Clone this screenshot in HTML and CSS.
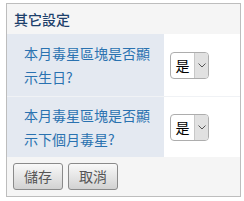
FILE: index.html
```html
<!DOCTYPE html>
<html>
<head>
<meta charset="utf-8">
<link rel="stylesheet" href="styles.css">
</head>
<body>
<div class="panel">
  <div class="panel-head">其它設定</div>
  <div class="row row-first">
    <div class="label">本月毒星區塊是否顯示生日?</div>
    <div class="field"><div class="select"><span class="val">是</span><span class="arrow"><svg width="8" height="5" viewBox="0 0 8 5"><path d="M0.5 0.5 L4 4 L7.5 0.5" fill="none" stroke="#555" stroke-width="1"/></svg></span></div></div>
  </div>
  <div class="row row-second">
    <div class="label">本月毒星區塊是否顯示下個月毒星?</div>
    <div class="field"><div class="select"><span class="val">是</span><span class="arrow"><svg width="8" height="5" viewBox="0 0 8 5"><path d="M0.5 0.5 L4 4 L7.5 0.5" fill="none" stroke="#555" stroke-width="1"/></svg></span></div></div>
  </div>
  <div class="panel-foot">
    <button class="btn">儲存</button>
    <button class="btn">取消</button>
  </div>
</div>
</body>
</html>
```
FILE: styles.css
```css
html, body {
  margin: 0;
  padding: 0;
  background: #fff;
}
body {
  padding: 3px 0 0 6px;
  font-family: "Noto Sans CJK TC", "Noto Sans CJK SC", sans-serif;
}
.panel {
  width: 233px;
  border: 1px solid #bdbdbd;
  background: #fff;
  display: flex;
  flex-direction: column;
}
.panel-head {
  height: 30px;
  background: #f5f5f5;
  color: #1d3f6b;
  font-size: 14px;
  font-weight: 500;
  line-height: 30px;
  padding-left: 7px;
  box-sizing: border-box;
}
.row {
  display: flex;
}
.row-first {
  height: 62px;
  border-bottom: 1px solid #f0f2f5;
}
.row-second {
  height: 60px;
}
.label {
  width: 157px;
  box-sizing: border-box;
  background: #e4e9f1;
  color: #2a72b0;
  font-size: 14px;
  line-height: 24px;
  padding: 7px 10px 0 17px;
}
.row-second .label {
  padding-top: 6px;
}
.field {
  flex: 1;
  display: flex;
  align-items: center;
  padding-left: 6px;
}
.select {
  width: 39px;
  height: 27px;
  box-sizing: border-box;
  border: 1px solid #adadad;
  border-radius: 4px;
  display: flex;
  overflow: hidden;
  background: #fff;
}
.val {
  width: 23px;
  font-size: 14px;
  line-height: 25px;
  color: #000;
  text-align: center;
}
.arrow {
  flex: 1;
  background: #e1e1e1;
  border-left: 1px solid #c8c8c8;
  display: flex;
  align-items: center;
  justify-content: center;
}
.panel-foot {
  height: 39px;
  background: #f5f5f5;
  padding: 6px 0 0 6px;
  box-sizing: border-box;
  display: flex;
  gap: 5px;
  align-items: flex-start;
}
.btn {
  width: 50px;
  height: 27px;
  margin: 0;
  padding: 0;
  border: 1px solid #8a8a8a;
  border-radius: 3px;
  background: linear-gradient(#f9f9f9, #d2d2d2);
  color: #555;
  font-family: "Noto Sans CJK TC", sans-serif;
  font-size: 14px;
  line-height: 25px;
}
```
